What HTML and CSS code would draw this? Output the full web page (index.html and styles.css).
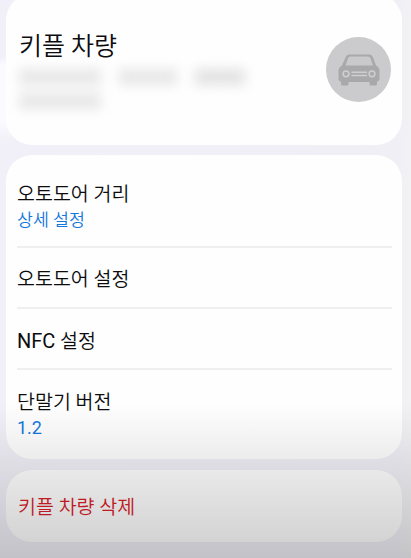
FILE: index.html
```html
<!DOCTYPE html>
<html lang="ko">
<head>
    <meta charset="utf-8" />
    <meta name="viewport" content="width=device-width, initial-scale=1" />
    <title>키플 차량</title>
    <link rel="stylesheet" href="styles.css">
</head>
<body>
    <main class="screen">
        <div class="edge-blur"></div>
        <section class="card vehicle">
            <div class="vehicle-info">
                <h1>키플 차량</h1>
                <div class="masked">
                    <div class="masked-line">
                        <span class="mask mask-a"></span>
                        <span class="mask mask-b"></span>
                        <span class="mask mask-c"></span>
                    </div>
                    <div class="masked-line">
                        <span class="mask mask-d"></span>
                    </div>
                </div>
            </div>
            <div class="avatar">
                <svg width="42" height="33" viewBox="0 0 42 33">
                    <path fill="#a9a8aa" d="M11.500 0.500H31Q34 0.500 35 3.500L38 11.500Q41.500 13 41.500 17V24.500Q41.500 27.500 39 27.500V30Q39 31.500 37.500 31.500H33Q31.500 31.500 31.500 30V28H10.500V30Q10.500 31.500 9 31.500H4.500Q3 31.500 3 30V27.500Q0.500 27.500 0.500 24.500V17Q0.500 13 4 11.500L7.500 3.500Q8.500 0.500 11.500 0.500Z"/>
                    <path fill="#c9c8ca" d="M12.500 2.500H30Q32 2.500 32.500 4.200L35 11.500H7.500L10 4.200Q10.500 2.500 12.500 2.500Z"/>
                    <g fill="none" stroke="#cfced0">
                        <circle cx="8" cy="19.800" r="2.900" stroke-width="1.500"/>
                        <circle cx="34" cy="19.800" r="2.900" stroke-width="1.500"/>
                        <path d="M14 18.200H28.500M14 21.600H28.500" stroke-width="1.500" stroke-linecap="round"/>
                    </g>
                </svg>
            </div>
        </section>

        <section class="card settings">
            <div class="row row-detail">
                <h2>오토도어 거리</h2>
                <p>상세 설정</p>
            </div>
            <div class="row">
                <h2>오토도어 설정</h2>
            </div>
            <div class="row">
                <h2><span class="latin">NFC</span> 설정</h2>
            </div>
            <div class="row row-detail">
                <h2>단말기 버전</h2>
                <p class="version">1.2</p>
            </div>
        </section>

        <section class="card delete">
            <h2>키플 차량 삭제</h2>
        </section>
        <div class="shade"></div>
    </main>
</body>
</html>
```

FILE: styles.css
```css
* {
    box-sizing: border-box;
}
body {
    margin: 0;
    font-family: Roboto, "Noto Sans CJK KR", sans-serif;
    color: #0c0c0e;
}
h1, h2, p {
    margin: 0;
    font-weight: 350;
    white-space: nowrap;
}
.screen {
    position: relative;
    display: flex;
    flex-direction: column;
    gap: 10px;
    height: 558px;
    padding: 0 9px 0 6px;
    overflow: hidden;
    background: linear-gradient(90deg, #f1eff7, #f0eff6 97%, #f2f2f5);
}
/* the blur over the masked text runs past the card edge */
.edge-blur {
    position: absolute;
    top: 56px;
    left: 0;
    width: 14px;
    height: 87px;
    background: linear-gradient(#f1eff7, #fbfaff 10%, #fbfaff 75%, #f1eff7);
}
.card {
    position: relative;
    flex: none;
    background: #fefefe;
    border-radius: 26px;
}
.vehicle {
    display: flex;
    justify-content: space-between;
    height: 151px;
    margin-top: -6px;
    padding: 36px 11px 0 13px;
}
h1 {
    font-size: 25px;
    line-height: 34px;
}
.masked {
    display: flex;
    flex-direction: column;
    gap: 8px;
    margin-top: 5px;
    filter: blur(6px);
}
.masked-line {
    display: flex;
    gap: 18px;
}
.mask {
    height: 16px;
    background: #e7e7e8;
}
.mask-a {
    width: 82px;
}
.mask-b {
    width: 58px;
}
.mask-c {
    width: 50px;
    background: #e2e2e3;
}
.mask-d {
    width: 82px;
}
.avatar {
    display: flex;
    align-items: center;
    justify-content: center;
    width: 65px;
    height: 65px;
    margin-top: 7px;
    border-radius: 50%;
    background: #cbcacc;
}
.avatar svg {
    margin-top: 1px;
}
.settings {
    height: 304px;
    padding: 0 10px 0 11px;
}
.row {
    height: 61px;
    padding-top: 18px;
    border-bottom: 2px solid #efefef;
}
.row-detail {
    height: 93px;
    padding-top: 26px;
}
.row:last-child {
    height: 89px;
    padding-top: 19px;
    border-bottom: 0;
}
h2 {
    font-size: 19.5px;
    line-height: 28px;
}
.latin {
    font-size: 20px;
    font-weight: 400;
}
.row p {
    font-size: 17.3px;
    line-height: 22px;
    color: #1478dc;
}
.row .version {
    font-size: 18px;
    font-weight: 400;
}
.delete {
    height: 72px;
    margin-top: 1px;
    padding: 24px 12px 0;
}
.delete h2 {
    color: #d92027;
}
/* bottom fade over the whole screen */
.shade {
    position: absolute;
    right: 0;
    bottom: 0;
    left: 0;
    height: 155px;
    background: linear-gradient(rgba(0, 0, 0, 0), rgba(0, 0, 0, 0.07) 36%, rgba(0, 0, 0, 0.19));
}
```
